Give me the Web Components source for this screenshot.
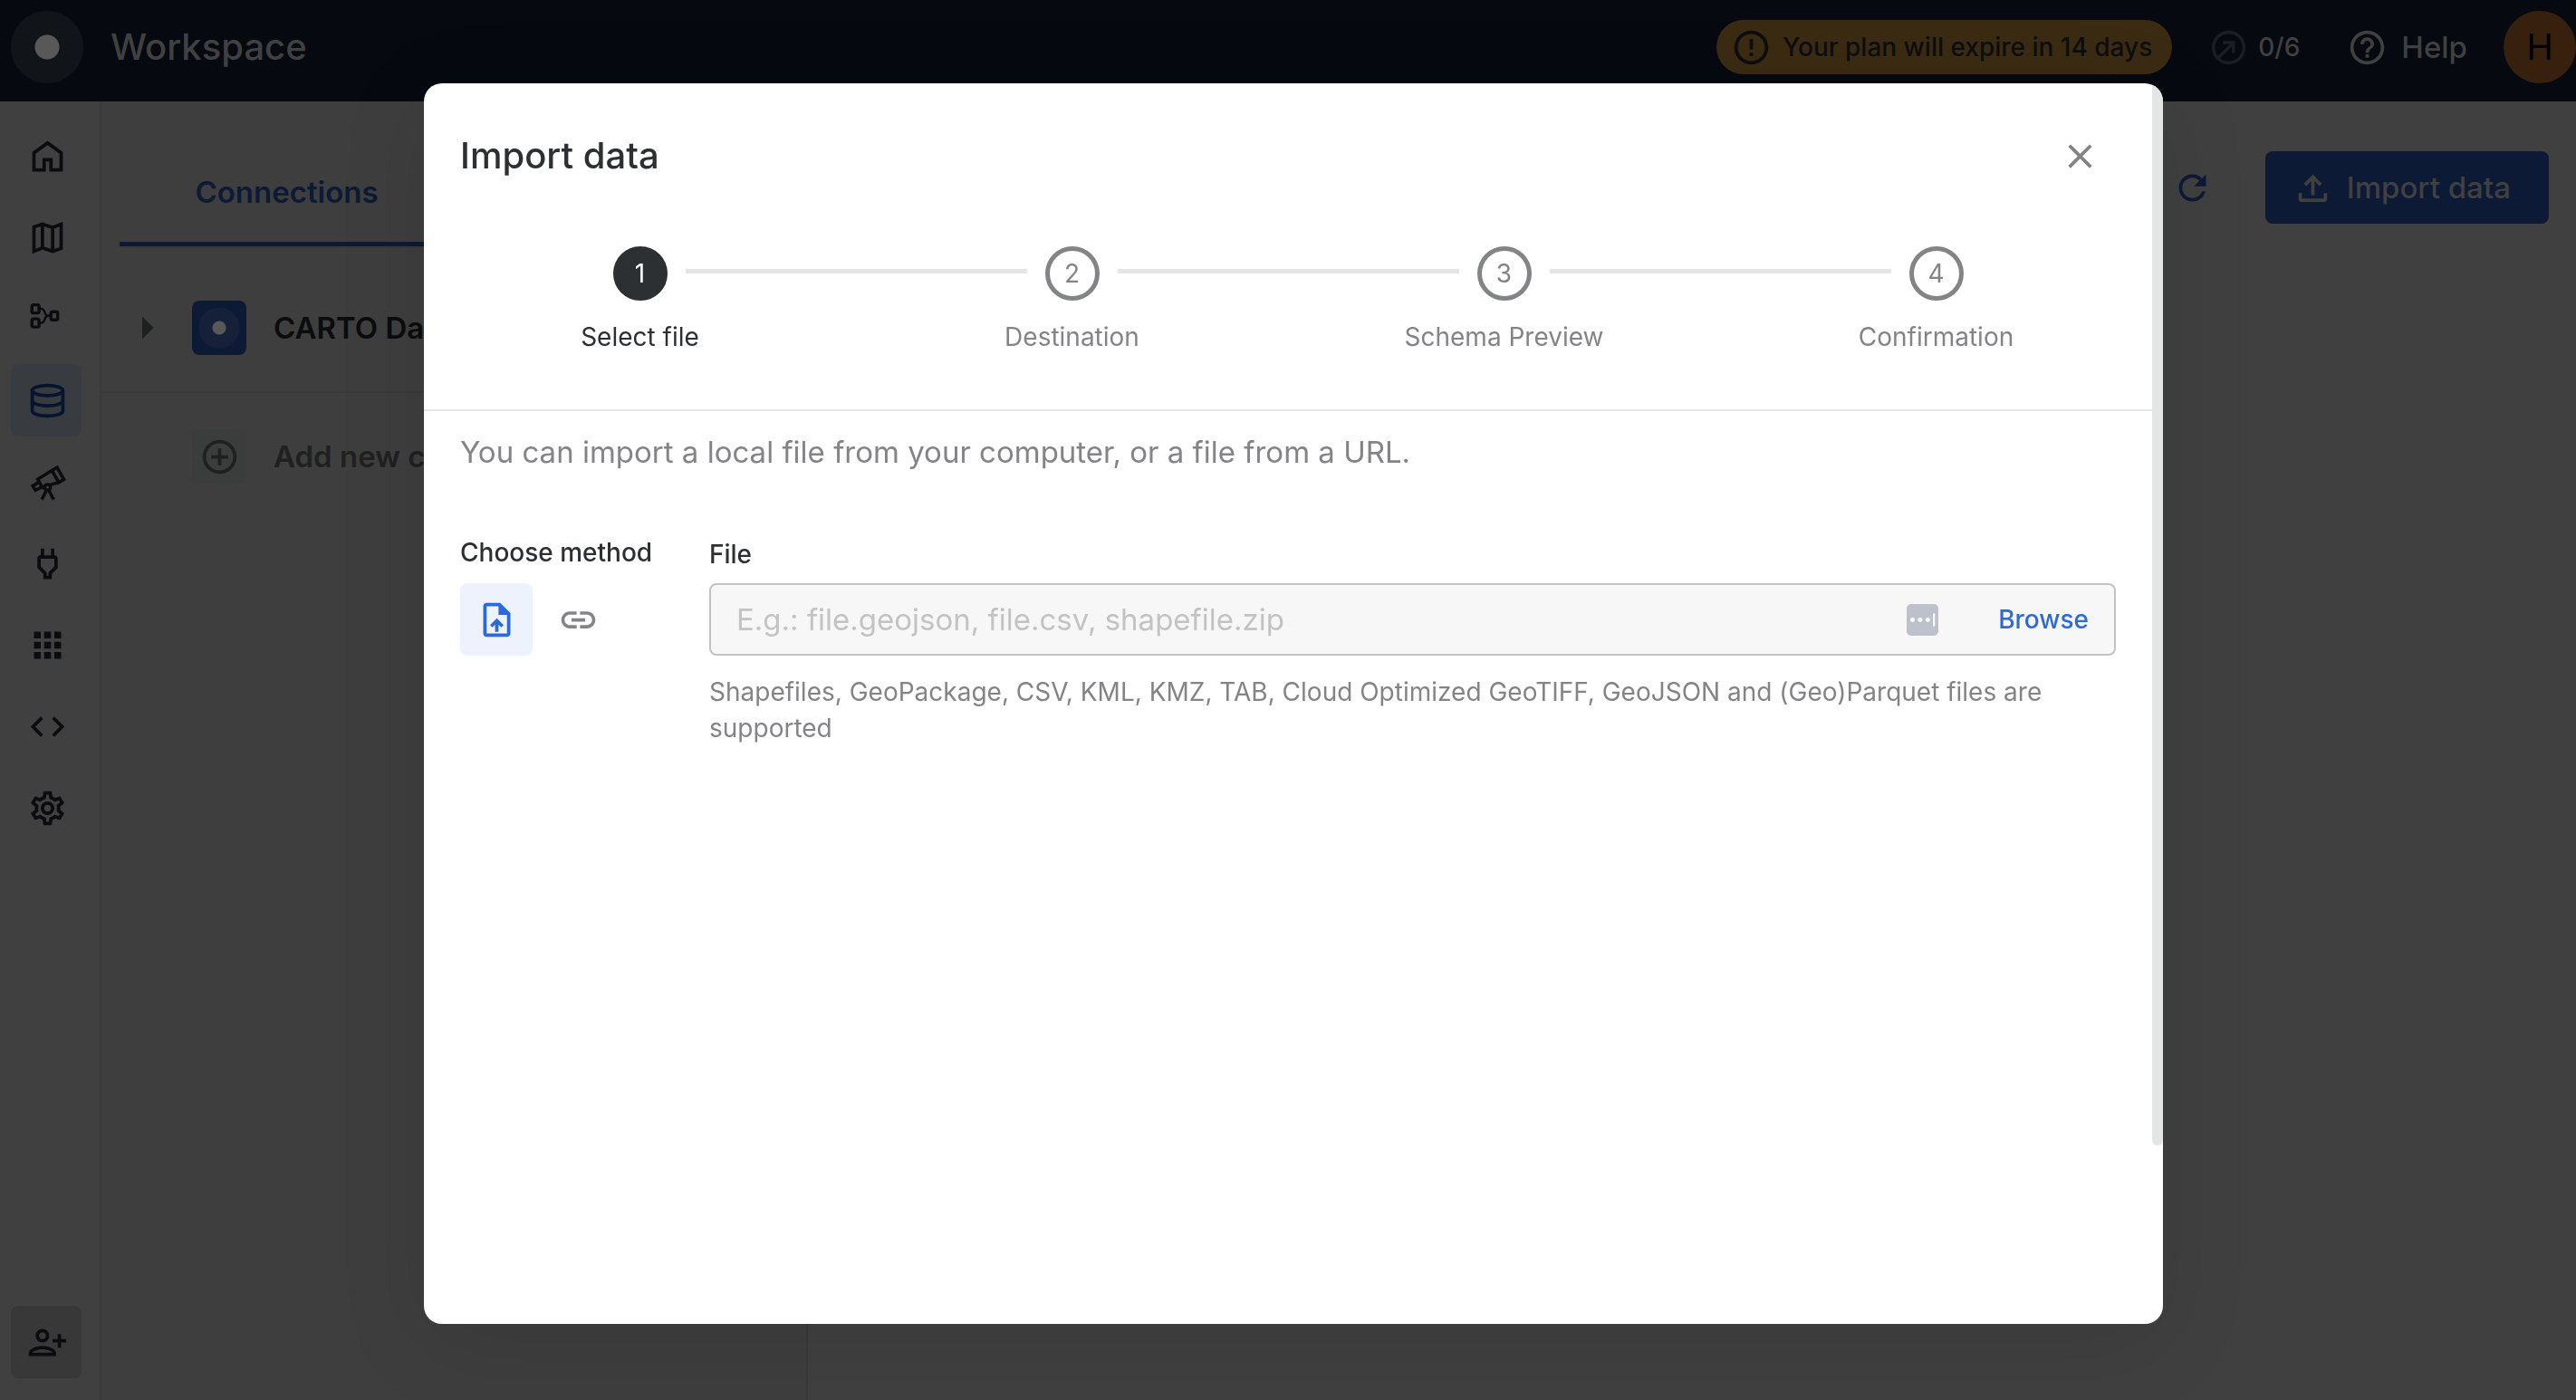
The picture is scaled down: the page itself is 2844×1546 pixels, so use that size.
<!DOCTYPE html>
<html lang="en">
<head>
<meta charset="utf-8">
<title>Workspace</title>
<style>
html, body {
  height: 100%;
  margin: 0;
}
body {
  --ink: #0b0c0d;
  --text: #2c3032;
  --muted: #828486;
  --line: #e4e6e5;
  --blue: #2c6adc;
  --dim-white: #404040;
  --dim-blue: #0c1a36;
  --dim-line: #393939;
  --dim-grey: #1f2020;

  font-family: Inter, "Liberation Sans", sans-serif;
  font-size: 33px;
  line-height: 50px;
  color: var(--text);
  overflow: hidden;
}
</style>
</head>
<body>
<workspace-app></workspace-app>

<script>
// ---------- Icons ----------
const icons = {
  home: '<path d="M12 4.2 20 10v10h-6v-6h-4v6H4V10z" fill="none" stroke="currentColor" stroke-width="2"/>',
  map: '<path d="M4 5.6 9 4l6 2 5-2v14.4L15 20l-6-2-5 2zM9 4v14M15 6v14" fill="none" stroke="currentColor" stroke-width="2"/>',
  workflow: '<g fill="none" stroke="currentColor" stroke-width="1.8"><rect x="2.8" y="3.5" width="4.2" height="4.8" rx="1"/><rect x="2.8" y="11.8" width="4.2" height="4.8" rx="1"/><rect x="14" y="7.6" width="4" height="4.8" rx="1"/><path d="M7 5.8h1c3.4 0 1.4 4.2 4.4 4.2H14M7 14.2h1c3.4 0 1.4-4.2 4.4-4.2" stroke-width="1.3"/></g>',
  data: '<g fill="none" stroke="currentColor" stroke-width="2"><ellipse cx="12" cy="6" rx="9" ry="3"/><path d="M3 6v12c0 1.7 4 3 9 3s9-1.3 9-3V6M3 12c0 1.7 4 3 9 3s9-1.3 9-3"/></g>',
  telescope: '<g fill="none" stroke="currentColor" stroke-width="1.9"><path d="m17.6 3.3 4 7-3 1.8-4-7z"/><path d="m14.6 5.1-8.4 5.2 2.8 4.8 1.6-.5M13.8 13.4l4.8-1.3M6.9 11.9l-3.6 2.3 1.6 2.6 3.7-2"/><circle cx="12" cy="15" r="1.7"/><path d="m11.4 16.6-2.8 5.6M12.6 16.6l3 5.6"/></g>',
  plug: '<path d="M16 9v4.66l-3.5 3.51V19h-1v-1.83L8 13.65V9h8m0-6h-2v4h-4V3H8v4h-.01C6.9 6.99 6 7.89 6 8.99v5.52L9.5 18v3h5v-3l3.5-3.51V9c0-1.1-.9-2-2-2V3z"/>',
  apps: '<path d="M4 8h4V4H4v4zm6 12h4v-4h-4v4zm-6 0h4v-4H4v4zm0-6h4v-4H4v4zm6 0h4v-4h-4v4zm6-10v4h4V4h-4zm-6 4h4V4h-4v4zm6 6h4v-4h-4v4zm0 6h4v-4h-4v4z"/>',
  code: '<path d="M9.4 16.6 4.8 12l4.6-4.6L8 6l-6 6 6 6 1.4-1.4zm5.2 0 4.6-4.6-4.6-4.6L16 6l6 6-6 6-1.4-1.4z"/>',
  settings: '<path d="M19.43 12.98c.04-.32.07-.64.07-.98 0-.34-.03-.66-.07-.98l2.11-1.65c.19-.15.24-.42.12-.64l-2-3.46c-.09-.16-.26-.25-.44-.25-.06 0-.12.01-.17.03l-2.49 1c-.52-.4-1.08-.73-1.69-.98l-.38-2.65C14.46 2.18 14.25 2 14 2h-4c-.25 0-.46.18-.49.42l-.38 2.65c-.61.25-1.17.59-1.69.98l-2.49-1c-.06-.02-.12-.03-.18-.03-.17 0-.34.09-.43.25l-2 3.46c-.13.22-.07.49.12.64l2.11 1.65c-.04.32-.07.65-.07.98 0 .33.03.66.07.98l-2.11 1.65c-.19.15-.24.42-.12.64l2 3.46c.09.16.26.25.44.25.06 0 .12-.01.17-.03l2.49-1c.52.4 1.08.73 1.69.98l.38 2.65c.03.24.24.42.49.42h4c.25 0 .46-.18.49-.42l.38-2.65c.61-.25 1.17-.59 1.69-.98l2.49 1c.06.02.12.03.18.03.17 0 .34-.09.43-.25l2-3.46c.12-.22.07-.49-.12-.64l-2.11-1.65zm-1.98-1.71c.04.31.05.52.05.73 0 .21-.02.43-.05.73l-.14 1.13.89.7 1.08.84-.7 1.21-1.27-.51-1.04-.42-.9.68c-.43.32-.84.56-1.25.73l-1.06.43-.16 1.13-.2 1.35h-1.4l-.19-1.35-.16-1.13-1.06-.43c-.43-.18-.83-.41-1.23-.71l-.91-.7-1.06.43-1.27.51-.7-1.21 1.08-.84.89-.7-.14-1.13c-.03-.31-.05-.54-.05-.74s.02-.43.05-.73l.14-1.13-.89-.7-1.08-.84.7-1.21 1.27.51 1.04.42.9-.68c.43-.32.84-.56 1.25-.73l1.06-.43.16-1.13.2-1.35h1.39l.19 1.35.16 1.13 1.06.43c.43.18.83.41 1.23.71l.91.7 1.06-.43 1.27-.51.7 1.21-1.07.85-.89.7.14 1.13zM12 8c-2.21 0-4 1.79-4 4s1.79 4 4 4 4-1.79 4-4-1.79-4-4-4zm0 6c-1.1 0-2-.9-2-2s.9-2 2-2 2 .9 2 2-.9 2-2 2z"/>',
  invite: '<path d="M13 8c0-2.21-1.79-4-4-4S5 5.79 5 8s1.79 4 4 4 4-1.79 4-4zm-2 0c0 1.1-.9 2-2 2s-2-.9-2-2 .9-2 2-2 2 .9 2 2zM1 18v2h16v-2c0-2.66-5.33-4-8-4s-8 1.34-8 4zm2 0c.2-.71 3.3-2 6-2 2.69 0 5.77 1.28 6 2H3zm17-3v-3h3v-2h-3V7h-2v3h-3v2h3v3h2z"/>',
  alert: '<path d="M11 15h2v2h-2zm0-8h2v6h-2zm.99-5C6.47 2 2 6.48 2 12s4.47 10 9.99 10C17.52 22 22 17.52 22 12S17.52 2 11.99 2zM12 20c-4.42 0-8-3.58-8-8s3.58-8 8-8 8 3.58 8 8-3.58 8-8 8z"/>',
  quota: '<g fill="none" stroke="currentColor" stroke-width="1.9"><circle cx="12" cy="12" r="9"/><path d="M6 18 14.8 9.2M8.6 9.1h6.2v6.1"/></g>',
  help: '<path d="M11 18h2v-2h-2v2zm1-16C6.48 2 2 6.48 2 12s4.48 10 10 10 10-4.48 10-10S17.52 2 12 2zm0 18c-4.41 0-8-3.59-8-8s3.59-8 8-8 8 3.59 8 8-3.59 8-8 8zm0-14c-2.21 0-4 1.79-4 4h2c0-1.1.9-2 2-2s2 .9 2 2c0 2-3 1.75-3 5h2c0-2.25 3-2.5 3-5 0-2.21-1.79-4-4-4z"/>',
  refresh: '<path d="M17.65 6.35C16.2 4.9 14.21 4 12 4c-4.42 0-7.99 3.58-7.99 8s3.57 8 7.99 8c3.73 0 6.84-2.55 7.73-6h-2.08c-.82 2.33-3.04 4-5.65 4-3.31 0-6-2.69-6-6s2.69-6 6-6c1.66 0 3.14.69 4.22 1.78L13 11h7V4l-2.35 2.35z"/>',
  upload: '<path d="M4.6 15v3.4c0 .5.4.9.9.9h13c.5 0 .9-.4.9-.9V15M12 16.3V5.6M7.4 10.2 12 5.6l4.6 4.6" fill="none" stroke="currentColor" stroke-width="2"/>',
  file: '<path d="M14 2H6c-1.1 0-1.99.9-1.99 2L4 20c0 1.1.89 2 1.99 2H18c1.1 0 2-.9 2-2V8l-6-6zm4 18H6V4h7v5h5v11zM8 15.01l1.41 1.41L11 14.84V19h2v-4.16l1.59 1.59L16 15.01 12.01 11 8 15.01z"/>',
  link: '<path d="M3.9 12c0-1.71 1.39-3.1 3.1-3.1h4V7H7c-2.76 0-5 2.24-5 5s2.24 5 5 5h4v-1.9H7c-1.71 0-3.1-1.39-3.1-3.1zM8 13h8v-2H8v2zm9-6h-4v1.9h4c1.71 0 3.1 1.39 3.1 3.1s-1.39 3.1-3.1 3.1h-4V17h4c2.76 0 5-2.24 5-5s-2.24-5-5-5z"/>',
  close: '<path d="M19 6.41 17.59 5 12 10.59 6.41 5 5 6.41 10.59 12 5 17.59 6.41 19 12 13.41 17.59 19 19 17.59 13.41 12z"/>',
  add: '<path d="M13 7h-2v4H7v2h4v4h2v-4h4v-2h-4V7zm-1-5C6.48 2 2 6.48 2 12s4.48 10 10 10 10-4.48 10-10S17.52 2 12 2zm0 18c-4.41 0-8-3.59-8-8s3.59-8 8-8 8 3.59 8 8-3.59 8-8 8z"/>',
  caret: '<path d="m10 17 5-5-5-5z"/>',
  password: '<rect width="24" height="24" rx="3.5"/><g fill="#fff"><circle cx="4.4" cy="12" r="1.7"/><circle cx="10.2" cy="12" r="1.7"/><circle cx="16" cy="12" r="1.7"/><rect x="20" y="7" width="1.4" height="10" rx=".7"/></g>'
}

class AppIcon extends HTMLElement {
  constructor() {
    super()
    this._shadowRoot = this.attachShadow({ mode: 'open' })
  }

  connectedCallback() {
    this._shadowRoot.innerHTML = `
      <style>
      :host { display: block; flex: none; width: 45px; height: 45px; }
      svg { display: block; width: 100%; height: 100%; fill: currentColor; }
      </style>
      <svg viewBox="0 0 24 24" aria-hidden="true">${icons[this.getAttribute('name')]}</svg>
    `
  }
}
customElements.define('app-icon', AppIcon)

// ---------- Top bar ----------
const topBarTemplate = document.createElement('template')
topBarTemplate.innerHTML = `
<style>
:host {
  display: flex;
  align-items: center;
  height: 112px;
  flex: none;
  box-sizing: border-box;
  padding: 0 0 8px 12px;
  background: #060910;
  color: var(--dim-white);
}
.logo {
  width: 80px;
  height: 80px;
  border-radius: 50%;
  background: radial-gradient(circle, #585858 13px, #111418 14px);
}
h1 {
  margin: 0 auto 0 30px;
  font-size: 40px;
  font-weight: 500;
}
.plan {
  display: flex;
  align-items: center;
  gap: 12px;
  height: 60px;
  box-sizing: border-box;
  padding: 0 22px 0 16px;
  border-radius: 30px;
  background: #3b2b13;
  color: #0c0e0f;
  font-size: 28px;
  font-weight: 500;
}
.quota {
  display: flex;
  align-items: center;
  gap: 10px;
  margin-left: 40px;
  font-size: 28px;
  font-weight: 500;
}
.quota app-icon {
  color: #1a1e20;
}
.help {
  display: flex;
  align-items: center;
  gap: 15px;
  margin: 0 40px 0 52px;
  color: inherit;
  font-weight: 500;
  text-decoration: none;
}
.avatar {
  width: 80px;
  height: 80px;
  padding: 0;
  border: 0;
  border-radius: 50%;
  background: #37200d;
  color: #000;
  font: inherit;
  font-size: 40px;
}
</style>
<div class="logo"></div>
<h1>Workspace</h1>
<div class="plan"><app-icon name="alert"></app-icon><span>Your plan will expire in 14 days</span></div>
<div class="quota"><app-icon name="quota"></app-icon><span>0/6</span></div>
<a class="help" href="#help"><app-icon name="help"></app-icon><span>Help</span></a>
<button class="avatar" type="button">H</button>
`

class TopBar extends HTMLElement {
  constructor() {
    super()
    this.attachShadow({ mode: 'open' }).append(topBarTemplate.content.cloneNode(true))
  }
}
customElements.define('top-bar', TopBar)

// ---------- Side navigation ----------
class SideNav extends HTMLElement {
  constructor() {
    super()
    this._shadowRoot = this.attachShadow({ mode: 'open' })
    this.$items = ['home', 'map', 'workflow', 'data', 'telescope', 'plug', 'apps', 'code', 'settings']
    this._active = 'data'
  }

  connectedCallback() {
    this._shadowRoot.innerHTML = `
      <style>
      :host {
        display: flex;
        flex: none;
        width: 112px;
        box-sizing: border-box;
        border-right: 2px solid var(--dim-line);
      }
      nav {
        display: flex;
        flex-direction: column;
        flex: 1;
        gap: 10px;
        padding: 20px 20px 24px 12px;
      }
      a, button {
        display: flex;
        align-items: center;
        height: 80px;
        padding: 0 0 0 18px;
        border: 0;
        border-radius: 8px;
        color: var(--ink);
        background: none;
      }
      a.active {
        background: #383c40;
        color: #07142e;
      }
      button {
        margin-top: auto;
        background: #383838;
      }
      </style>
      <nav>
        ${this.$items.map(item => `<a href="#${item}" aria-label="${item}" class="${item === this._active ? 'active' : ''}"><app-icon name="${item}"></app-icon></a>`).join('')}
        <button type="button" aria-label="invite"><app-icon name="invite"></app-icon></button>
      </nav>
    `
  }
}
customElements.define('side-nav', SideNav)

// ---------- Connections panel ----------
const connectionsTemplate = document.createElement('template')
connectionsTemplate.innerHTML = `
<style>
:host {
  display: block;
  flex: none;
  width: 780px;
  box-sizing: border-box;
  border-right: 2px solid var(--dim-line);
  background: #3e3e3e;
}
.tabs {
  margin: 45px 20px 0;
  border-bottom: 2px solid var(--dim-line);
}
.tabs button {
  display: block;
  width: 50%;
  height: 115px;
  padding: 0;
  border: 0;
  border-bottom: 5px solid var(--dim-blue);
  background: none;
  color: var(--dim-blue);
  font: inherit;
  font-weight: 600;
}
ul {
  margin: 0;
  padding: 18px 0 0;
  list-style: none;
}
li {
  display: flex;
  align-items: center;
  height: 140px;
  padding-left: 20px;
  border-bottom: 2px solid var(--dim-line);
  font-weight: 600;
  color: var(--ink);
}
li.add {
  border: 0;
  padding-left: 100px;
  color: var(--dim-grey);
}
.caret {
  width: 60px;
  height: 60px;
  margin-right: 20px;
  padding: 0;
  border: 0;
  background: none;
  color: var(--dim-grey);
}
.caret app-icon {
  width: 60px;
  height: 60px;
}
.tile {
  display: grid;
  place-items: center;
  width: 60px;
  height: 60px;
  margin-right: 30px;
  border-radius: 8px;
  background: radial-gradient(circle, #585858 7px, #162038 8px 22px, #0c1a36 23px);
}
.add .tile {
  background: #3b3d3c;
}
</style>
<div class="tabs"><button type="button">Connections</button></div>
<ul>
  <li><button class="caret" type="button" aria-label="expand"><app-icon name="caret"></app-icon></button><span class="tile"></span>CARTO Data</li>
  <li class="add"><span class="tile"><app-icon name="add"></app-icon></span>Add new c</li>
</ul>
`

class ConnectionsPanel extends HTMLElement {
  constructor() {
    super()
    this.attachShadow({ mode: 'open' }).append(connectionsTemplate.content.cloneNode(true))
  }
}
customElements.define('connections-panel', ConnectionsPanel)

// ---------- Page toolbar ----------
const toolbarTemplate = document.createElement('template')
toolbarTemplate.innerHTML = `
<style>
:host {
  display: flex;
  justify-content: flex-end;
  align-items: center;
  flex: 1;
  height: 80px;
  margin: 55px 30px 0;
  gap: 40px;
}
button {
  display: flex;
  align-items: center;
  height: 80px;
  gap: 15px;
  border: 0;
  border-radius: 8px;
  background: none;
  color: var(--dim-blue);
  font: inherit;
  font-weight: 500;
}
.import {
  padding: 0 42px 0 30px;
  background: #0c1a36;
  color: var(--dim-white);
}
.refresh {
  padding: 0 18px;
}
</style>
<button class="refresh" type="button" aria-label="refresh"><app-icon name="refresh"></app-icon></button>
<button class="import" type="button"><app-icon name="upload"></app-icon>Import data</button>
`

class PageToolbar extends HTMLElement {
  constructor() {
    super()
    this.attachShadow({ mode: 'open' }).append(toolbarTemplate.content.cloneNode(true))
  }
}
customElements.define('page-toolbar', PageToolbar)

// ---------- Stepper ----------
class AppStepper extends HTMLElement {
  constructor() {
    super()
    this._shadowRoot = this.attachShadow({ mode: 'open' })
    this.$steps = ['Select file', 'Destination', 'Schema Preview', 'Confirmation']
  }

  get current() {
    return Number(this.getAttribute('current')) || 1
  }

  connectedCallback() {
    this._shadowRoot.innerHTML = `
      <style>
      :host { display: block; }
      ol {
        display: grid;
        grid-template-columns: repeat(4, 1fr);
        margin: 0;
        padding: 20px 0 60px;
        list-style: none;
      }
      li {
        position: relative;
        display: flex;
        flex-direction: column;
        align-items: center;
        gap: 20px;
        color: var(--muted);
        font-size: 28px;
        line-height: 40px;
      }
      /* connector from the previous circle to this one */
      li + li::before {
        content: '';
        position: absolute;
        top: 25px;
        left: calc(-50% + 50px);
        right: calc(50% + 50px);
        height: 5px;
        background: var(--line);
      }
      .circle {
        display: grid;
        place-items: center;
        width: 60px;
        height: 60px;
        box-sizing: border-box;
        border: 5px solid currentColor;
        border-radius: 50%;
      }
      li.current { color: var(--text); }
      .current .circle { background: var(--text); }
      .current .circle span { color: #fff; }
      </style>
      <ol>
        ${this.$steps.map((step, i) => `<li class="${i + 1 === this.current ? 'current' : ''}"><div class="circle"><span>${i + 1}</span></div><span>${step}</span></li>`).join('')}
      </ol>
    `
  }
}
customElements.define('app-stepper', AppStepper)

// ---------- File field ----------
const fileFieldTemplate = document.createElement('template')
fileFieldTemplate.innerHTML = `
<style>
:host {
  display: block;
}
label {
  display: block;
  margin-bottom: 9px;
  font-size: 28px;
  line-height: 45px;
  font-weight: 500;
}
.box {
  display: flex;
  align-items: center;
  height: 80px;
  box-sizing: border-box;
  padding: 0 28px;
  border: 2px solid #c1c3c2;
  border-radius: 8px;
  background: #f7f7f7;
}
input {
  flex: 1;
  min-width: 0;
  height: 100%;
  padding: 0;
  border: 0;
  outline: 0;
  background: none;
  font: inherit;
}
input::placeholder {
  color: #c2c4c3;
  opacity: 1;
}
.box app-icon {
  width: 35px;
  height: 35px;
  margin-right: 66px;
  color: #bcc1cb;
}
button {
  padding: 0;
  border: 0;
  background: none;
  color: var(--blue);
  font: inherit;
  font-size: 28px;
  font-weight: 500;
}
.helper {
  display: block;
  margin-top: 20px;
  color: var(--muted);
  font-size: 28px;
  line-height: 40px;
}
</style>
<label for="file">File</label>
<div class="box">
  <input id="file" type="text" readonly placeholder="E.g.: file.geojson, file.csv, shapefile.zip">
  <app-icon name="password"></app-icon>
  <button type="button">Browse</button>
</div>
<span class="helper"><slot></slot></span>
`

class FileField extends HTMLElement {
  constructor() {
    super()
    this.attachShadow({ mode: 'open' }).append(fileFieldTemplate.content.cloneNode(true))
  }
}
customElements.define('file-field', FileField)

// ---------- Method picker ----------
const methodTemplate = document.createElement('template')
methodTemplate.innerHTML = `
<style>
:host {
  display: block;
}
.title {
  margin-bottom: 14px;
  font-size: 28px;
  line-height: 40px;
  font-weight: 500;
}
.options {
  display: flex;
  gap: 10px;
}
button {
  display: grid;
  place-items: center;
  width: 80px;
  height: 80px;
  padding: 0;
  border: 0;
  border-radius: 8px;
  background: none;
  color: var(--muted);
}
button[aria-pressed="true"] {
  background: #edf2fc;
  color: var(--blue);
}
</style>
<div class="title" id="title">Choose method</div>
<div class="options" role="group" aria-labelledby="title">
  <button type="button" aria-pressed="true" aria-label="file"><app-icon name="file"></app-icon></button>
  <button type="button" aria-pressed="false" aria-label="link"><app-icon name="link"></app-icon></button>
</div>
`

class MethodPicker extends HTMLElement {
  constructor() {
    super()
    this._shadowRoot = this.attachShadow({ mode: 'open' })
    this._shadowRoot.append(methodTemplate.content.cloneNode(true))
    this._buttons = this._shadowRoot.querySelectorAll('button')
    this._buttons.forEach(button => {
      button.addEventListener('click', () => this.select(button))
    })
  }

  select(button) {
    this._buttons.forEach(b => b.setAttribute('aria-pressed', b === button))
  }
}
customElements.define('method-picker', MethodPicker)

// ---------- Dialog ----------
const dialogTemplate = document.createElement('template')
dialogTemplate.innerHTML = `
<style>
:host {
  position: fixed;
  inset: 0;
  display: flex;
  justify-content: center;
  box-sizing: border-box;
  padding: 92px 0 84px 12px;
}
.paper {
  position: relative;
  width: 100%;
  max-width: 1920px;
  box-sizing: border-box;
  padding-right: 12px;
  border-radius: 20px;
  background: #fff;
  box-shadow: 0 20px 100px rgba(0, 0, 0, .1);
  overflow: hidden;
}
/* scroll thumb on the right edge */
.thumb {
  position: absolute;
  top: 0;
  right: 0;
  width: 12px;
  height: 1173px;
  max-height: 86%;
  border-radius: 0 0 6px 6px;
  background: var(--line);
}
header {
  display: flex;
  align-items: center;
  justify-content: space-between;
  height: 160px;
  padding: 0 40px;
}
h2 {
  margin: 0;
  font-size: 40px;
  font-weight: 500;
}
.close {
  display: grid;
  place-items: center;
  width: 80px;
  height: 80px;
  padding: 0;
  border: 0;
  background: none;
  color: var(--muted);
}
.content {
  padding: 20px 40px;
  border-top: 2px solid var(--line);
}
</style>
<div class="paper" role="dialog" aria-labelledby="title">
  <header>
    <h2 id="title"><slot name="title"></slot></h2>
    <button class="close" type="button" aria-label="close"><app-icon name="close"></app-icon></button>
  </header>
  <slot name="steps"></slot>
  <div class="content"><slot></slot></div>
  <div class="thumb"></div>
</div>
`

class AppDialog extends HTMLElement {
  constructor() {
    super()
    this._shadowRoot = this.attachShadow({ mode: 'open' })
    this._shadowRoot.append(dialogTemplate.content.cloneNode(true))
    this._shadowRoot.querySelector('.close').addEventListener('click', () => this.remove())
  }
}
customElements.define('app-dialog', AppDialog)

// ---------- App ----------
const appTemplate = document.createElement('template')
appTemplate.innerHTML = `
<style>
:host {
  display: flex;
  flex-direction: column;
  min-height: 100vh;
  background: var(--dim-white);
}
main {
  display: flex;
  flex: 1;
  align-items: stretch;
}
p {
  margin: 0 0 66px;
  color: var(--muted);
}
.form {
  display: grid;
  grid-template-columns: 235px 1fr;
  gap: 40px;
}
</style>
<top-bar></top-bar>
<main>
  <side-nav></side-nav>
  <connections-panel></connections-panel>
  <page-toolbar></page-toolbar>
</main>
<app-dialog>
  <span slot="title">Import data</span>
  <app-stepper slot="steps" current="1"></app-stepper>
  <p>You can import a local file from your computer, or a file from a URL.</p>
  <div class="form">
    <method-picker></method-picker>
    <file-field>Shapefiles, GeoPackage, CSV, KML, KMZ, TAB, Cloud Optimized GeoTIFF, GeoJSON and (Geo)Parquet files are supported</file-field>
  </div>
</app-dialog>
`

class WorkspaceApp extends HTMLElement {
  constructor() {
    super()
    this.attachShadow({ mode: 'open' }).append(appTemplate.content.cloneNode(true))
  }
}
customElements.define('workspace-app', WorkspaceApp)
</script>
</body>
</html>
